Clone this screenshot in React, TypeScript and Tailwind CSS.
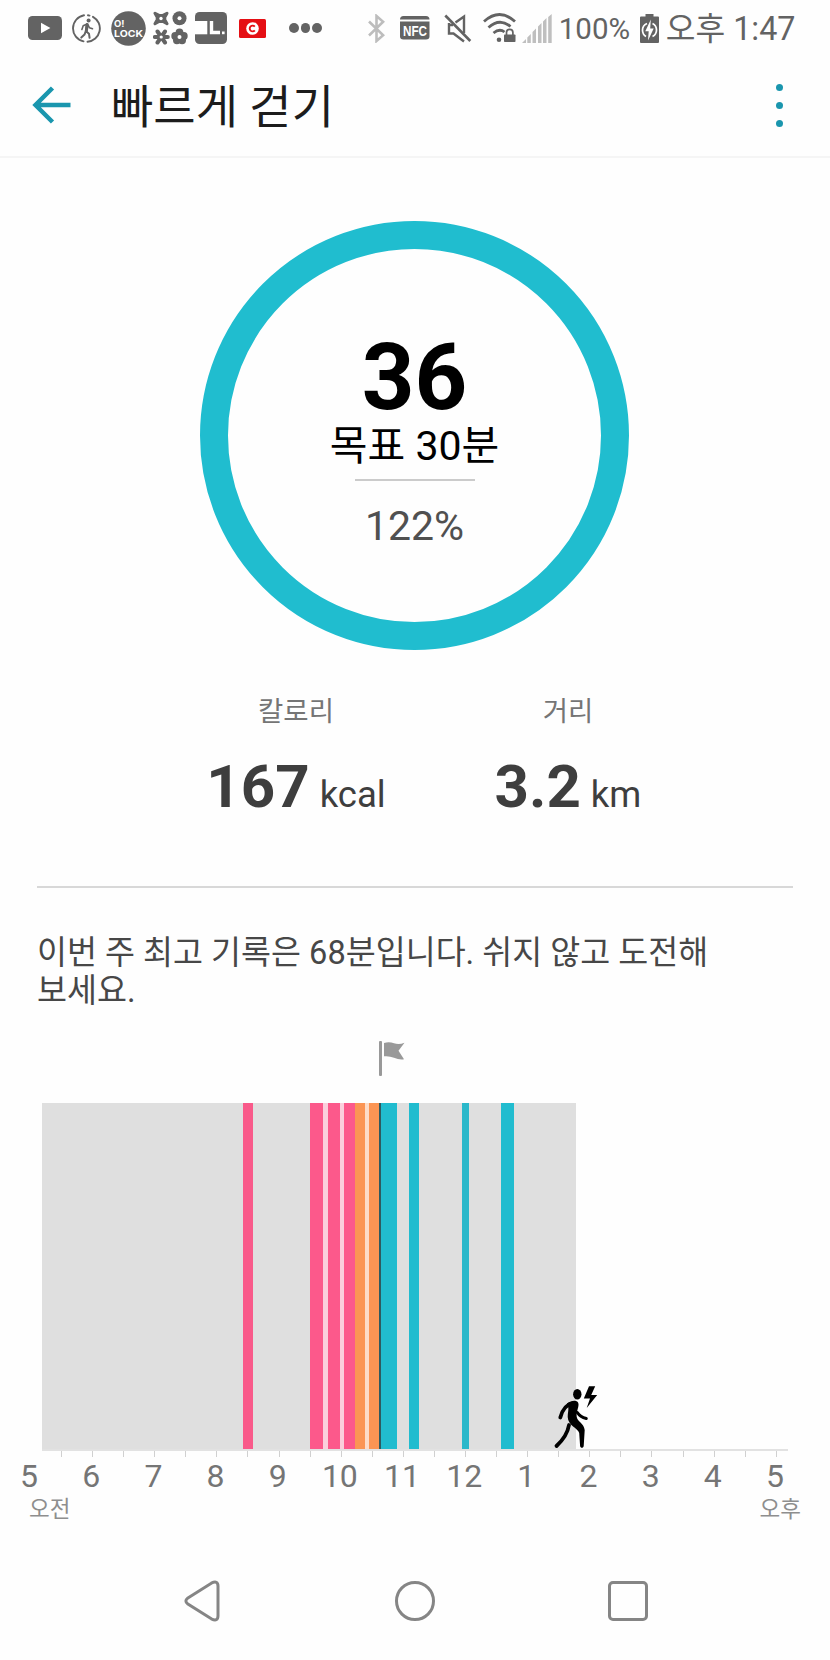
type Segment = { start: number; end: number; color: string };

// Positions are in px from the left edge of the screen
const CHART_LEFT = 41.5;
const SEGMENTS: Segment[] = [
    { start: 243, end: 253, color: 'bg-[#f95a8a]' },
    { start: 309.5, end: 323, color: 'bg-[#fc598b]' },
    { start: 323, end: 327.5, color: 'bg-[#fbcfdc]' },
    { start: 327.5, end: 339.5, color: 'bg-[#fc598b]' },
    { start: 339.5, end: 344, color: 'bg-[#fbcfdc]' },
    { start: 344, end: 355, color: 'bg-[#fc598b]' },
    { start: 355, end: 365.3, color: 'bg-[#fb9554]' },
    { start: 365.3, end: 369, color: 'bg-[#fddcc8]' },
    { start: 369, end: 379.3, color: 'bg-[#fb9554]' },
    { start: 379.3, end: 381.5, color: 'bg-[#2f5a60]' },
    { start: 381.5, end: 396.7, color: 'bg-[#21bccf]' },
    { start: 409.3, end: 419, color: 'bg-[#21bccf]' },
    { start: 462.3, end: 469, color: 'bg-[#2bb8ca]' },
    { start: 501.3, end: 513.7, color: 'bg-[#21bccf]' },
];

const HOURS = ['5', '6', '7', '8', '9', '10', '11', '12', '1', '2', '3', '4', '5'];

function StatusBar() {
    return (
        <div className="h-[56px] flex items-center text-[#636363]">
            {/* YouTube */}
            <svg className="ml-[28px] w-[34px] h-[24px] shrink-0" viewBox="0 0 34 24">
                <rect width="34" height="24" rx="4.5" fill="#636363" />
                <path d="M13 6.8v10.4l9.4-5.2z" fill="#fff" />
            </svg>
            {/* Walking */}
            <svg className="ml-[10px] w-[29px] h-[29px] shrink-0" viewBox="0 0 29 29" fill="none" stroke="#636363" strokeLinecap="round" strokeLinejoin="round">
                <path d="M12 1.3A13.3 13.3 0 0 0 11.5 27.4M15.5 27.7A13.3 13.3 0 0 0 21 2.8M16 1.3l1.5.3" strokeWidth="1.9" />
                <circle cx="16.6" cy="6.5" r="2" fill="#636363" stroke="none" />
                <path d="M14.8 10.500l-1 6.500 3.200 2.800.6 4M13.800 17l-1.300 3.600-3.200 3" strokeWidth="2" />
                <path d="M14.5 10.300l-3.300 1.500-1.300 3.700M16 11l1.500 2.800 3 1" strokeWidth="1.600" />
                <path d="M15.200 10.500l-.8 6.300" strokeWidth="3" />
            </svg>
            {/* O! Lock */}
            <svg className="ml-[10px] w-[35px] h-[35px] shrink-0" viewBox="0 0 35 35">
                <circle cx="17.5" cy="17.5" r="17.3" fill="#636363" />
                <text x="3" y="16.4" fill="#fff" fontSize="9" fontWeight="700" fontFamily="Inter, sans-serif" textLength="10.5" lengthAdjust="spacingAndGlyphs">O!</text>
                <text x="3" y="26.4" fill="#fff" fontSize="9.5" fontWeight="700" fontFamily="Inter, sans-serif" textLength="29" lengthAdjust="spacingAndGlyphs">LOCK</text>
            </svg>
            {/* Four shapes */}
            <svg className="ml-[7px] w-[35px] h-[34px] shrink-0" viewBox="0 0 35 34" fill="#636363">
                <path d="M2 2.200l4 2.200h4l4-2.200-2.200 4v2.500l2.200 4-4-2.200H6l-4 2.200 2.200-4V6.200z" stroke="#636363" strokeWidth="3" strokeLinejoin="round" />
                <circle cx="26.5" cy="7.3" r="7" />
                <path d="M4.500 20.500l7.500 11M12 20.500l-7.500 11M1.800 26h13" stroke="#636363" strokeWidth="4" strokeLinecap="round" />
                <circle cx="26.5" cy="21.5" r="3.9" />
                <circle cx="22.2" cy="25" r="3.9" />
                <circle cx="30.8" cy="25" r="3.9" />
                <circle cx="23.9" cy="29.3" r="3.9" />
                <circle cx="29.1" cy="29.3" r="3.9" />
                <circle cx="8" cy="7.5" r="1.7" fill="#fff" />
                <circle cx="26.5" cy="7.3" r="2" fill="#fff" />
                <circle cx="8.2" cy="26" r="1.6" fill="#fff" />
                <circle cx="26.5" cy="26" r="2" fill="#fff" />
            </svg>
            {/* JL */}
            <svg className="ml-[7px] w-[32px] h-[32px] shrink-0" viewBox="0 0 32 32">
                <rect width="32" height="32" rx="4.5" fill="#636363" />
                <path d="M0 9h12.300v13.300H0z" fill="#fff" />
                <path d="M16.500 9v11.500h8.500" fill="none" stroke="#fff" strokeWidth="3.400" />
                <rect x="27" y="19.500" width="2.600" height="2.700" fill="#fff" />
            </svg>
            {/* Red badge */}
            <svg className="ml-[12px] w-[27px] h-[19px] shrink-0" viewBox="0 0 27 19">
                <rect width="27" height="19" rx="1.5" fill="#e50f14" />
                <circle cx="13.5" cy="9.5" r="6.3" fill="#fff" />
                <path d="M15.800 7.600a2.900 2.900 0 1 0 0 3.800" fill="none" stroke="#e50f14" strokeWidth="1.9" />
            </svg>
            {/* More notifications */}
            <div className="ml-[23px] flex gap-[2px]">
                <span className="w-[9.6px] h-[9.6px] rounded-full bg-[#636363]" />
                <span className="w-[9.6px] h-[9.6px] rounded-full bg-[#636363]" />
                <span className="w-[9.6px] h-[9.6px] rounded-full bg-[#636363]" />
            </div>

            {/* Bluetooth */}
            <svg className="ml-[46px] w-[17px] h-[29px] shrink-0" viewBox="0 0 17 29" fill="none" stroke="#bdbdbd" strokeWidth="2.6">
                <path d="M1 7.500l14.200 13.700L8.500 27V2l6.700 5.800L1 21.500" />
            </svg>
            {/* NFC */}
            <svg className="ml-[15px] w-[30px] h-[24px] shrink-0 overflow-visible" viewBox="0 0 30 24">
                <path d="M0 3.500Q0 0 3.500 0h22.500Q29.500 0 29.500 3.500zM0 5.500h29.500v15q0 3-3.500 3h-22.500q-3.500 0-3.500-3z" fill="#636363" />
                <text x="3" y="20" fill="#fff" fontSize="14" fontWeight="700" fontFamily="Liberation Sans, sans-serif" textLength="24" lengthAdjust="spacingAndGlyphs">NFC</text>
            </svg>
            {/* Muted */}
            <svg className="ml-[14px] w-[28px] h-[29px] shrink-0" viewBox="0 0 28 29" fill="none" stroke="#636363" strokeWidth="2.4">
                <path d="M1.300 1.500l25 25.500" strokeWidth="2.6" />
                <path d="M11.500 8.500L20 2.500v16.500M5 9v10.500h4.500l10.500 8M9 11H5" />
            </svg>
            {/* Wi-Fi, secured */}
            <svg className="ml-[11px] w-[34px] h-[30px] shrink-0" viewBox="0 0 34 30" fill="none" stroke="#636363" strokeWidth="2.8">
                <path d="M1 8.500q15.500-14 31 0M5.500 14.500q11-10 22-1M10.500 20q6-5 11-1" />
                <circle cx="16" cy="26.7" r="2.3" fill="#636363" stroke="none" />
                <rect x="21" y="21.5" width="11.5" height="7.5" rx=".8" fill="#636363" stroke="none" />
                <path d="M23.500 22v-2.500a3.200 3.200 0 0 1 6.400 0V22" strokeWidth="1.7" />
            </svg>
            {/* Signal */}
            <svg className="ml-[5px] w-[30px] h-[29px] shrink-0" viewBox="0 0 30 29" fill="#bfbfbf">
                <path d="M0 29l4-4v4zM5.300 29v-5.500l3.500-3.500V29zM10.500 29V18l3.500-3.500V29zM16 29V12.500l3.500-3.500V29zM21 29V7.500l3.500-3.500V29zM26.200 29V3l3.500-3v29z" />
            </svg>
            <span className="ml-[7px] mt-[2px] w-[72px] text-[29.5px] leading-[56px] whitespace-nowrap">100%</span>
            {/* Battery */}
            <svg className="ml-[9px] w-[19px] h-[29px] shrink-0" viewBox="0 0 19 29">
                <path d="M5.500 0h8v2.500H18q1 0 1 1V28q0 1-1 1H1q-1 0-1-1V3.500q0-1 1-1h4.500z" fill="#636363" />
                <path d="M7 9.500Q2.500 11.500 2.500 16t3.500 6.500M12.500 9.500Q16.500 11.500 16.500 16T12.500 22.500" fill="none" stroke="#fff" strokeWidth="1.7" />
                <path d="M10.800 5.500L5.300 17.200h3.400L8 26.500l5.700-12h-3.500z" fill="#fff" />
            </svg>
            <span className="ml-[7px] mt-[2px] text-[32.3px] leading-[56px] whitespace-nowrap">오후 1:47</span>
        </div>
    );
}

function Header() {
    return (
        <div className="h-[102px] border-b-2 border-[#f5f5f5] flex items-start">
            <svg className="ml-[32px] mt-[30px] w-[39px] h-[38px]" viewBox="0 0 39 38" fill="none" stroke="#1a96ae" strokeWidth="4.5">
                <path d="M38.500 19H4M20.500 2L3.500 19l17 17" />
            </svg>
            <h1 className="ml-[40px] mt-[21px] text-[46px] leading-[60px] text-[#1c1c1c]">빠르게 걷기</h1>
            <div className="ml-auto mr-[47px] mt-[28px] flex flex-col gap-[11px]">
                <span className="w-[7px] h-[7px] rounded-full bg-[#1a96ae]" />
                <span className="w-[7px] h-[7px] rounded-full bg-[#1a96ae]" />
                <span className="w-[7px] h-[7px] rounded-full bg-[#1a96ae]" />
            </div>
        </div>
    );
}

function Stat({ label, value, unit }: { label: string; value: string; unit: string }) {
    return (
        <div className="flex flex-col items-center">
            <p className="text-[27.5px] leading-[34px] text-[#757575]">{label}</p>
            <p className="mt-[28px] h-[60px] text-[60px] leading-[60px] text-[#3e3e3e] whitespace-nowrap">
                <span className="font-bold">{value}</span>
                <span className="ml-[10px] text-[36.5px] leading-none">{unit}</span>
            </p>
        </div>
    );
}

function ActivityChart() {
    return (
        <div className="relative mt-[26.5px]">
            <div className="ml-[41.5px] w-[534.5px] h-[346px] bg-[#dfdfdf] flex">
                {SEGMENTS.map((s, i) => {
                    const prev = i === 0 ? CHART_LEFT : SEGMENTS[i - 1].end;
                    return (
                        <div
                            key={s.start}
                            className={`h-full shrink-0 ${s.color}`}
                            style={{ width: s.end - s.start, marginLeft: s.start - prev }}
                        />
                    );
                })}
            </div>
            <div className="ml-[41.5px] w-[746.5px] h-[2px] bg-[#e2e2e2]" />
            <div className="ml-[61px] w-[716px] h-[6px] flex justify-between">
                {Array.from({ length: 24 }, (_, i) => (
                    <span key={i} className="w-px h-full bg-[#d0d0d0]" />
                ))}
            </div>

            {/* Current position */}
            <svg className="absolute left-[553px] top-[283px] w-[45px] h-[64px]" viewBox="0 0 45 64" stroke="#000" strokeLinecap="round" strokeLinejoin="round" fill="none">
                <ellipse cx="24.3" cy="8.2" rx="4.2" ry="5.2" fill="#000" stroke="none" />
                <path d="M36 .2h6.200l-4 8.800h6L33.700 22l3.300-9.500h-6.200z" fill="#000" stroke="none" />
                <path d="M20 17c-7 1.500-10.500 6-12.700 14.500" strokeWidth="3.800" />
                <path d="M14 17.500c5-3.500 11-4 11.500.5.300 4-3 9-1.500 14 .5 3 7 5.500 7.700 12l-1 16c-.2 2.400-3.400 2.400-3.600 0L26.200 47C25 42 15 40 14.700 31c0-4 1-7 .6-9.500z" fill="#000" stroke="none" />
                <path d="M24.300 26.500c2.500 4 5.700 5.200 9 6" strokeWidth="3" />
                <path d="M16 39c-1.500 9-6 15-12.500 21" strokeWidth="3.800" />
            </svg>
        </div>
    );
}

function NavBar() {
    return (
        <div className="mt-[56px] pl-[183px] pr-[182px] h-[42px] flex items-center justify-between">
            <svg className="w-[39px] h-[42px]" viewBox="0 0 39 42" fill="none" stroke="#858585" strokeWidth="3">
                <path d="M4.500 18.300L28.300 3.200q6.700-3.200 6.700 3v29.600q0 6.200-6.700 3L4.500 23.700q-3.200-2.700 0-5.400z" />
            </svg>
            <div className="w-[40px] h-[40px] rounded-full border-3 border-[#858585]" />
            <div className="w-[40px] h-[40px] rounded-[5px] border-3 border-[#858585]" />
        </div>
    );
}

export default function App() {
    return (
        <div className="w-[830px] h-[1660px] overflow-hidden bg-[#fefefe] font-[Roboto,'Noto_Sans_CJK_KR',sans-serif]">
            <StatusBar />
            <Header />

            {/* Goal ring */}
            <div className="ml-[200px] mt-[63px] w-[429px] h-[429px] rounded-full border-[28px] border-[#20bdcf] flex flex-col items-center pt-[84px]">
                <p className="text-[92px] leading-[89px] font-bold text-black">36</p>
                <p className="text-[41px] leading-[48px] text-black whitespace-nowrap">목표 30분</p>
                <div className="mt-[9px] w-[120px] h-[2px] shrink-0 bg-[#cbcbcb]" />
                <p className="mt-[21px] text-[41px] leading-[48px] text-[#505050]">122%</p>
            </div>

            <div className="mt-[45px] ml-[160px] w-[544px] grid grid-cols-2">
                <Stat label="칼로리" value="167" unit="kcal" />
                <Stat label="거리" value="3.2" unit="km" />
            </div>

            <div className="mt-[69px] mx-[37px] h-[2px] bg-[#d8d8d8]" />

            <p className="mt-[46px] ml-[37px] text-[32.6px] leading-[38px] text-[#474747] whitespace-nowrap">
                이번 주 최고 기록은 68분입니다. 쉬지 않고 도전해
                <br />
                보세요.
            </p>

            {/* Goal reached flag */}
            <svg className="mt-[31px] ml-[379px] w-[26px] h-[35px]" viewBox="0 0 26 35" fill="#999">
                <rect width="3" height="35" rx="1" />
                <path d="M5 2q5-1.800 10 .3 5 1.700 10.500-.5l-6 8 5.500 8.500q-5 .7-10-1.500-5-2.200-10-1.500z" />
            </svg>

            <ActivityChart />

            <div className="w-[808px] -ml-[2px] mt-[2px] flex text-[#757575] text-[32px] leading-[34px]">
                {HOURS.map((h, i) => (
                    <span key={i} className="flex-1 text-center">
                        {h}
                    </span>
                ))}
            </div>
            <div className="mt-[1px] pl-[29px] pr-[29px] flex justify-between text-[22.5px] leading-[30px] text-[#8e8e8e]">
                <span>오전</span>
                <span>오후</span>
            </div>

            <NavBar />
        </div>
    );
}
